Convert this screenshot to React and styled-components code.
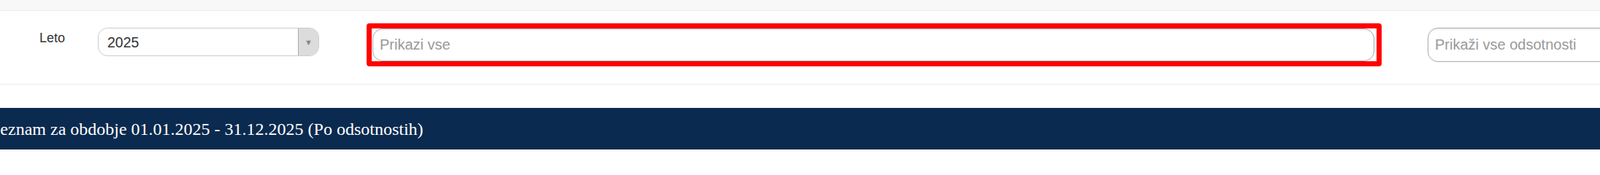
import React from "react";
import styled, { createGlobalStyle } from "styled-components";

const GlobalStyle = createGlobalStyle`
	html, body {
		margin: 0;
		padding: 0;
		background: #ffffff;
		font-family: "Liberation Sans", Arial, sans-serif;
		overflow: hidden;
	}
`;

const TopStrip = styled.div`
	height: 14px;
	background-color: #f8f8f8;
	border-bottom: 1px solid #ebebeb;
`;

const FilterRow = styled.div`
	display: flex;
	align-items: flex-start;
	height: 100px;
	border-bottom: 1px solid #ebebeb;
	padding-left: 54px;
	white-space: nowrap;
	overflow: hidden;

	& > * {
		flex-shrink: 0;
	}
`;

const Label = styled.label`
	font-size: 18px;
	color: #333;
	margin-top: 27px;
	width: 80px;
`;

const Select = styled.div`
	display: flex;
	width: 303px;
	height: 39px;
	margin-top: 23px;
	box-sizing: border-box;
	border: 1px solid #ccc;
	border-radius: 13px;
	overflow: hidden;
`;

const SelectValue = styled.div`
	flex: 1;
	padding: 6px 12px;
	font-size: 19.5px;
	line-height: 26px;
	color: #333;
`;

const SelectArrow = styled.div`
	width: 27px;
	background-color: #dcdcdc;
	border-left: 1px solid #aaa;
	display: flex;
	align-items: center;
	justify-content: center;
	color: #888;
	font-size: 11px;
`;

const Highlight = styled.div`
	margin-top: 17px;
	margin-left: 65px;
	width: 1390px;
	height: 59px;
	box-sizing: border-box;
	border: 7px solid #ff0000;
	border-radius: 4px;
	padding-left: 1px;
	padding-right: 3px;
`;

const Input = styled.input`
	display: block;
	box-sizing: border-box;
	width: ${(p) => p.$width || "100%"};
	height: ${(p) => p.$height || "45px"};
	border: 1px solid #aaa;
	border-radius: 14px;
	padding: 0 9px;
	font-family: "Liberation Sans", Arial, sans-serif;
	font-size: 20px;
	color: #333;
	background: #fff;
	box-shadow: inset 0 3px 2px -1px #eef2f5;
	outline: none;

	&::placeholder {
		color: #999;
	}
`;

const RightInput = styled.div`
	margin-top: 23px;
	margin-left: 63px;
`;

const ListHeader = styled.div`
	margin-top: 32px;
	height: 55px;
	background-color: #0b2a4f;
	color: #fff;
	font-family: "Liberation Serif", "Times New Roman", serif;
	font-size: 24px;
	line-height: 55px;
	padding-top: 2px;
	text-indent: -13px;
	white-space: nowrap;
`;

export default function App() {
	return (
		<>
			<GlobalStyle />
			<TopStrip />
			<FilterRow>
				<Label>Leto</Label>
				<Select>
					<SelectValue>2025</SelectValue>
					<SelectArrow>▼</SelectArrow>
				</Select>
				<Highlight>
					<Input placeholder="Prikazi vse" />
				</Highlight>
				<RightInput>
					<Input $width="300px" $height="47px" placeholder="Prikaži vse odsotnosti" />
				</RightInput>
			</FilterRow>
			<ListHeader>Seznam za obdobje 01.01.2025 - 31.12.2025 (Po odsotnostih)</ListHeader>
		</>
	);
}
